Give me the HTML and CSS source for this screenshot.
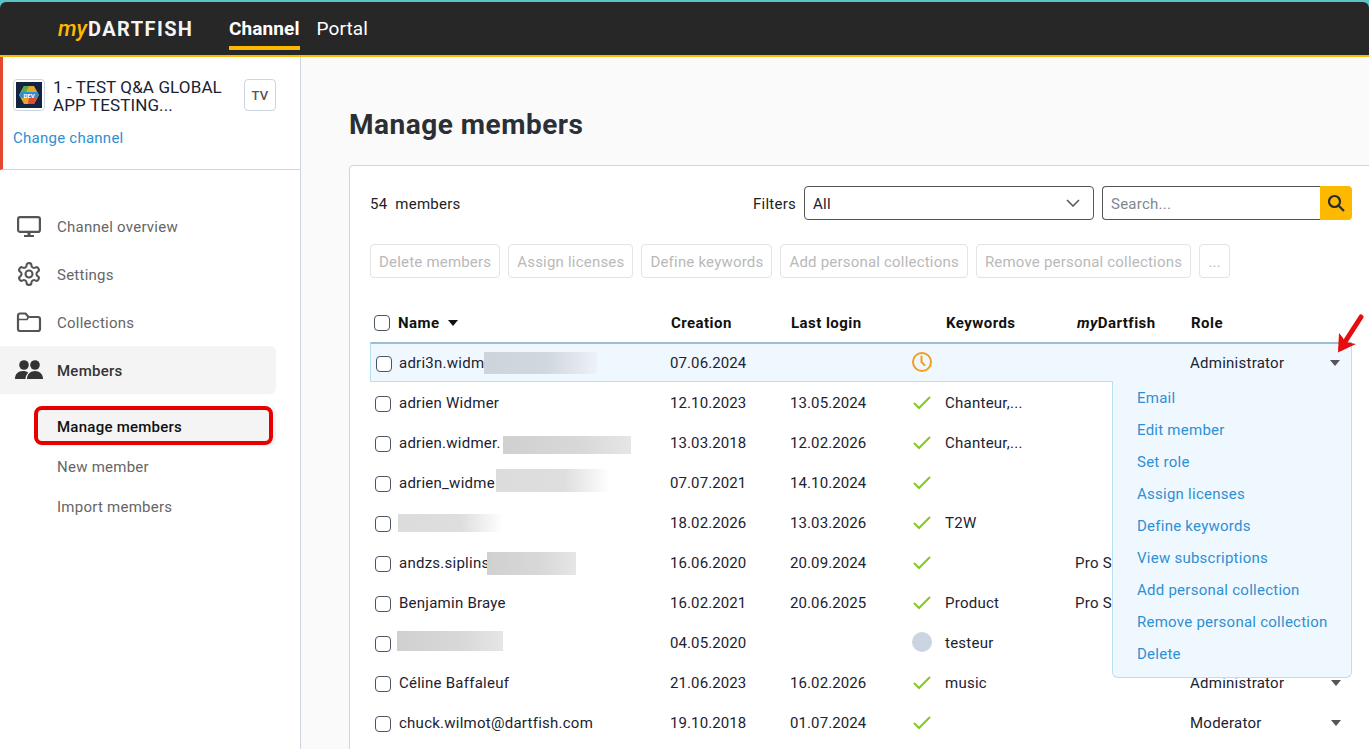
FILE: index.html
```html
<!DOCTYPE html>
<html lang="en">
<head>
<meta charset="utf-8">
<title>Manage members</title>
<link rel="stylesheet" href="styles.css">
</head>
<body>
<div class="app">
  <header class="topbar">
    <div class="logo"><span class="logo-my">my</span><span class="logo-name">DARTFISH</span></div>
    <nav class="topnav">
      <a class="topnav-item is-active">Channel</a>
      <a class="topnav-item">Portal</a>
    </nav>
  </header>
  <div class="body-row">
    <aside class="sidebar">
      <section class="channel">
        <div class="channel-head">
          <div class="channel-thumb">
            <svg width="26" height="26" viewBox="0 0 26 26"><rect width="26" height="26" fill="#14233f"/><path d="M8 4h10l5 9-5 9H8l-5-9z" fill="#e8a52c"/><path d="M8 4h5l-3 6H5z" fill="#4caf50"/><path d="M13 15h8l-3 7h-6z" fill="#e2493b"/><path d="M3 13l2-3h16l2 3-2 3H5z" fill="#2c8fd0"/><text class="thumb-text" x="13" y="15.500" text-anchor="middle">DEV</text></svg>
          </div>
          <div class="channel-name">1 - TEST Q&amp;A GLOBAL APP TESTING...</div>
          <div class="channel-badge">TV</div>
        </div>
        <a class="channel-change">Change channel</a>
      </section>
      <nav class="side-nav">
        <a class="side-item">
          <svg class="side-icon" viewBox="0 0 26 24" fill="none" stroke="#555" stroke-width="2.200"><rect x="2.100" y="3.100" width="21.800" height="14.800" rx="2"/><path d="M13 19v2" stroke-width="3"/><path d="M8 22h10" stroke-width="2"/></svg>
          <span>Channel overview</span>
        </a>
        <a class="side-item">
          <svg class="side-icon" viewBox="1 1 22 22" fill="none" stroke="#555" stroke-width="1.900" stroke-linejoin="round"><path d="M12.220 2h-.44a2 2 0 0 0-2 2v.18a2 2 0 0 1-1 1.730l-.43.25a2 2 0 0 1-2 0l-.15-.08a2 2 0 0 0-2.730.73l-.22.38a2 2 0 0 0 .73 2.730l.15.1a2 2 0 0 1 1 1.720v.51a2 2 0 0 1-1 1.740l-.15.09a2 2 0 0 0-.73 2.730l.22.38a2 2 0 0 0 2.730.73l.15-.08a2 2 0 0 1 2 0l.43.25a2 2 0 0 1 1 1.730V20a2 2 0 0 0 2 2h.44a2 2 0 0 0 2-2v-.18a2 2 0 0 1 1-1.730l.43-.25a2 2 0 0 1 2 0l.15.08a2 2 0 0 0 2.730-.73l.22-.39a2 2 0 0 0-.73-2.730l-.15-.08a2 2 0 0 1-1-1.740v-.5a2 2 0 0 1 1-1.740l.15-.09a2 2 0 0 0 .73-2.730l-.22-.38a2 2 0 0 0-2.730-.73l-.15.08a2 2 0 0 1-2 0l-.43-.25a2 2 0 0 1-1-1.730V4a2 2 0 0 0-2-2z"/><circle cx="12" cy="12" r="3.200"/></svg>
          <span>Settings</span>
        </a>
        <a class="side-item">
          <svg class="side-icon" viewBox="0 0 26 24" fill="none" stroke="#555" stroke-width="2.200" stroke-linejoin="round"><path d="M2 5.500a2 2 0 0 1 2-2h5.500l3 3.500H22a2 2 0 0 1 2 2V19a2 2 0 0 1-2 2H4a2 2 0 0 1-2-2z"/><path d="M2 9.500h9l1.500-2.500" stroke-width="1.600"/></svg>
          <span>Collections</span>
        </a>
        <a class="side-item is-current">
          <svg class="side-icon members-icon" viewBox="0 0 28 20" fill="#333"><circle cx="9" cy="5" r="4.800"/><circle cx="20" cy="5" r="4.800"/><path d="M0 19c0-5 3-8 8-8 2.300 0 4 .6 5.300 1.800C11.500 14.500 10.500 16.500 10.500 19z"/><path d="M12 19c0-5 3.500-8 8-8s8 3 8 8z"/></svg>
          <span>Members</span>
        </a>
        <div class="sub-nav">
          <a class="sub-item is-current">Manage members<span class="highlight-box"></span></a>
          <a class="sub-item">New member</a>
          <a class="sub-item">Import members</a>
        </div>
      </nav>
    </aside>
    <main class="content">
      <h1 class="page-title">Manage members</h1>
      <section class="card">
        <div class="filter-row">
          <div class="count">54&nbsp; members</div>
          <div class="filters">
            <label class="filter-label">Filters</label>
            <div class="select">
              <span>All</span>
              <svg width="14" height="8" viewBox="0 0 14 8" fill="none" stroke="#555" stroke-width="1.500"><path d="M1 1l6 6 6-6"/></svg>
            </div>
            <div class="search">
              <span class="search-input">Search...</span>
              <span class="search-btn">
                <svg width="18" height="18" viewBox="0 0 18 18" fill="none" stroke="#2b2b2b" stroke-width="2.200"><circle cx="7.500" cy="7.500" r="5.500"/><path d="M11.500 11.500l5.500 5.500"/></svg>
              </span>
            </div>
          </div>
        </div>
        <div class="actions">
          <button class="action">Delete members</button>
          <button class="action">Assign licenses</button>
          <button class="action">Define keywords</button>
          <button class="action">Add personal collections</button>
          <button class="action">Remove personal collections</button>
          <button class="action action-more">...</button>
        </div>
        <div class="table">
          <div class="row head">
            <span class="check"></span>
            <span class="name">Name<i class="sort"></i></span>
            <span>Creation</span>
            <span>Last login</span>
            <span></span>
            <span>Keywords</span>
            <span><em>my</em>Dartfish</span>
            <span>Role</span>
          </div>
          <div class="row is-open">
            <span class="check"></span>
            <span class="name">adri3n.widm<i class="blur blur-blue b1"></i></span>
            <span class="date">07.06.2024</span><span></span>
            <span class="status"><svg class="clock" width="22" height="22" viewBox="0 0 22 22" fill="none" stroke="#f39c1f" stroke-width="2"><circle cx="11" cy="11" r="9"/><path d="M10.500 5.500v5.500l3 3" stroke-linecap="round"/></svg></span>
            <span></span><span></span>
            <span class="role">Administrator<i class="caret"></i></span>
          </div>
          <div class="row">
            <span class="check"></span><span class="name">adrien Widmer</span>
            <span class="date">12.10.2023</span><span class="date">13.05.2024</span>
            <span class="status"><svg class="tick" width="18" height="14" viewBox="0 0 18 14" fill="none" stroke="#85c822" stroke-width="2"><path d="M1 7l5 5L17 1"/></svg></span>
            <span>Chanteur,...</span><span></span><span></span>
          </div>
          <div class="row">
            <span class="check"></span><span class="name">adrien.widmer.<i class="blur blur-grey b2"></i></span>
            <span class="date">13.03.2018</span><span class="date">12.02.2026</span>
            <span class="status"><svg class="tick" width="18" height="14" viewBox="0 0 18 14" fill="none" stroke="#85c822" stroke-width="2"><path d="M1 7l5 5L17 1"/></svg></span>
            <span>Chanteur,...</span><span></span><span></span>
          </div>
          <div class="row">
            <span class="check"></span><span class="name">adrien_widme<i class="blur blur-fade b3"></i></span>
            <span class="date">07.07.2021</span><span class="date">14.10.2024</span>
            <span class="status"><svg class="tick" width="18" height="14" viewBox="0 0 18 14" fill="none" stroke="#85c822" stroke-width="2"><path d="M1 7l5 5L17 1"/></svg></span>
            <span></span><span></span><span></span>
          </div>
          <div class="row">
            <span class="check"></span><span class="name"><i class="blur blur-fade b4"></i></span>
            <span class="date">18.02.2026</span><span class="date">13.03.2026</span>
            <span class="status"><svg class="tick" width="18" height="14" viewBox="0 0 18 14" fill="none" stroke="#85c822" stroke-width="2"><path d="M1 7l5 5L17 1"/></svg></span>
            <span>T2W</span><span></span><span></span>
          </div>
          <div class="row">
            <span class="check"></span><span class="name">andzs.siplins<i class="blur blur-grey b5"></i></span>
            <span class="date">16.06.2020</span><span class="date">20.09.2024</span>
            <span class="status"><svg class="tick" width="18" height="14" viewBox="0 0 18 14" fill="none" stroke="#85c822" stroke-width="2"><path d="M1 7l5 5L17 1"/></svg></span>
            <span></span><span>Pro S</span><span></span>
          </div>
          <div class="row">
            <span class="check"></span><span class="name">Benjamin Braye</span>
            <span class="date">16.02.2021</span><span class="date">20.06.2025</span>
            <span class="status"><svg class="tick" width="18" height="14" viewBox="0 0 18 14" fill="none" stroke="#85c822" stroke-width="2"><path d="M1 7l5 5L17 1"/></svg></span>
            <span>Product</span><span>Pro S</span><span></span>
          </div>
          <div class="row">
            <span class="check"></span><span class="name"><i class="blur blur-grey b6"></i></span>
            <span class="date">04.05.2020</span><span></span>
            <span class="status"><i class="dot"></i></span>
            <span>testeur</span><span></span><span></span>
          </div>
          <div class="row">
            <span class="check"></span><span class="name">Céline Baffaleuf</span>
            <span class="date">21.06.2023</span><span class="date">16.02.2026</span>
            <span class="status"><svg class="tick" width="18" height="14" viewBox="0 0 18 14" fill="none" stroke="#85c822" stroke-width="2"><path d="M1 7l5 5L17 1"/></svg></span>
            <span>music</span><span></span><span class="role">Administrator<i class="caret"></i></span>
          </div>
          <div class="row">
            <span class="check"></span><span class="name">chuck.wilmot@dartfish.com</span>
            <span class="date">19.10.2018</span><span class="date">01.07.2024</span>
            <span class="status"><svg class="tick" width="18" height="14" viewBox="0 0 18 14" fill="none" stroke="#85c822" stroke-width="2"><path d="M1 7l5 5L17 1"/></svg></span>
            <span></span><span></span><span class="role">Moderator<i class="caret"></i></span>
          </div>
          <ul class="menu">
            <li>Email</li>
            <li>Edit member</li>
            <li>Set role</li>
            <li>Assign licenses</li>
            <li>Define keywords</li>
            <li>View subscriptions</li>
            <li>Add personal collection</li>
            <li>Remove personal collection</li>
            <li>Delete</li>
          </ul>
          <svg class="arrow" width="30" height="42" viewBox="0 0 30 42"><path d="M26 3L6 34" stroke="#e50d0d" stroke-width="5" stroke-linecap="round" fill="none"/><path d="M3 38.500L4 19l4 5 2 4 11 2z" fill="#e50d0d"/></svg>
        </div>
      </section>
    </main>
  </div>
</div>
</body>
</html>
```
FILE: styles.css
```css
* { box-sizing: border-box; }
html, body { margin: 0; height: 100%; overflow: hidden; }
body {
  background: #5cc4c6;
  font-family: Roboto, "Liberation Sans", sans-serif;
  font-size: 15px;
  letter-spacing: .25px;
  color: #1c2230;
}
.app {
  height: 749px;
  padding-top: 2px;
  display: flex;
  flex-direction: column;
}
.topbar {
  height: 55px;
  flex: none;
  background: #272727;
  border-bottom: 2px solid #fdb900;
  border-radius: 6px 6px 0 0;
  display: flex;
  align-items: flex-start;
  padding-left: 58px;
  color: #fff;
  letter-spacing: 0;
}
.logo {
  width: 171px;
  height: 53px;
  display: flex;
  align-items: center;
}
.logo-my {
  color: #fdb900;
  font-style: italic;
  font-weight: 500;
  font-size: 22px;
  margin-right: 1px;
}
.logo-name {
  font-size: 20px;
  font-weight: 700;
  letter-spacing: 1.400px;
  color: #f4f4f4;
}
.topnav { display: flex; gap: 17px; }
.topnav-item {
  font-size: 19px;
  height: 48px;
  padding-top: 15px;
  letter-spacing: .1px;
}
.topnav-item.is-active {
  font-weight: 700;
  border-bottom: 4px solid #fdb900;
}
.body-row { flex: 1; min-height: 0; display: flex; background: #fafafa; }
.sidebar {
  width: 301px;
  flex: none;
  background: #fff;
  border-right: 1px solid #cfd5dc;
}
.channel {
  height: 113px;
  border-left: 3px solid #e2492f;
  border-bottom: 1px solid #cfd5dc;
  padding: 22px 24px 0 10px;
}
.channel-head { display: flex; align-items: flex-start; }
.channel-thumb {
  width: 32px;
  height: 32px;
  flex: none;
  border: 1px solid #cbd5e1;
  border-radius: 4px;
  padding: 2px;
}
.channel-thumb svg { display: block; }
.thumb-text { font-size: 6px; font-weight: 700; fill: #fff; letter-spacing: 0; }
.channel-name {
  width: 191px;
  margin: -1px 0 0 8px;
  font-size: 17px;
  line-height: 18px;
  letter-spacing: .12px;
  color: #1a2233;
}
.channel-badge {
  width: 32px;
  height: 32px;
  flex: none;
  border: 1px solid #cbd5e1;
  border-radius: 4px;
  color: #555;
  font-size: 13px;
  font-weight: 500;
  display: flex;
  align-items: center;
  justify-content: center;
}
.channel-change { display: block; margin-top: 15px; color: #2f8fd3; font-size: 15px; }
.side-nav { padding: 32px 24px 0 0; }
.side-item {
  height: 48px;
  display: flex;
  align-items: center;
  padding-left: 16px;
  color: #666;
  font-size: 15px;
}
.side-item span { margin-left: 15px; padding-top: 1px; }
.side-item.is-current { background: #f4f4f4; border-radius: 0 6px 6px 0; color: #333; font-weight: 500; }
.side-icon { width: 26px; height: 24px; flex: none; }
.members-icon { width: 28px; margin: 0 -1px; }
.sub-nav { padding: 12px 0 0 36px; }
.sub-item {
  position: relative;
  height: 40px;
  display: flex;
  align-items: center;
  padding: 2px 0 0 21px;
  color: #666;
  font-size: 15px;
}
.sub-item.is-current { background: #f4f4f4; color: #111; font-weight: 500; border-radius: 6px; }
.highlight-box {
  position: absolute;
  left: -2px;
  top: 0;
  width: 239px;
  height: 39px;
  border: 4px solid #e60000;
  border-radius: 8px;
}
.content { flex: 1; min-width: 0; padding: 0 0 0 48px; }
.page-title {
  margin: 0;
  height: 108px;
  padding-top: 51px;
  font-size: 28px;
  font-weight: 700;
  letter-spacing: .5px;
  color: #2b2f36;
  line-height: 34px;
}
.card {
  width: 1040px;
  height: 600px;
  background: #fff;
  border: 1px solid #cfd5dc;
  border-radius: 4px 0 0 0;
  padding: 20px 20px 0 20px;
}
.filter-row { width: 982px; height: 34px; display: flex; align-items: center; justify-content: space-between; }
.count { padding-top: 2px; color: #222; }
.filters { display: flex; align-items: center; }
.filter-label { margin-right: 8px; padding-top: 1px; color: #222; }
.select {
  width: 290px;
  height: 34px;
  border: 1px solid #555;
  border-radius: 4px;
  padding: 0 13px 0 8px;
  display: flex;
  align-items: center;
  justify-content: space-between;
}
.select span { padding-top: 2px; }
.search { width: 250px; height: 34px; margin-left: 8px; display: flex; }
.search-input {
  flex: 1;
  border: 1px solid #555;
  border-right: 0;
  border-radius: 4px 0 0 4px;
  padding-left: 8px;
  line-height: 34px;
  color: #808890;
}
.search-btn {
  width: 32px;
  background: #fdb900;
  border-radius: 0 4px 4px 0;
  display: flex;
  align-items: center;
  justify-content: center;
}
.actions { display: flex; gap: 8px; margin-top: 24px; height: 34px; }
.action {
  height: 34px;
  padding: 2px 8px 0;
  background: #fff;
  border: 1px solid #e3e3e3;
  border-radius: 4px;
  color: #b9b9b9;
  font: 15px Roboto, "Liberation Sans", sans-serif;
  letter-spacing: .2px;
}
.action-more { min-width: 31px; }
.table { position: relative; width: 982px; margin-top: 24px; }
.row {
  height: 40px;
  display: grid;
  grid-template-columns: 29px 271px 120px 122px 33px 130px 115px 162px;
  align-items: center;
  padding-top: 2px;
  white-space: nowrap;
}
.row > span { min-width: 0; }
.date { letter-spacing: .1px; }
.check {
  width: 16px;
  height: 16px;
  margin: 2px 0 0 5px;
  border: 1.500px solid #4b5563;
  border-radius: 4px;
  background: #fff;
}
.row.head {
  font-weight: 700;
  color: #111;
  letter-spacing: .45px;
  grid-template-columns: 28px 273px 120px 122px 33px 131px 114px 161px;
}
.row.head .check { margin: 0 0 0 4px; }
.row.head em { font-style: italic; }
.sort {
  display: block;
  width: 0;
  height: 0;
  margin-left: 8px;
  border: 5px solid transparent;
  border-top: 6px solid #111;
  border-bottom: 0;
}
.name { display: flex; align-items: center; }
.is-open {
  background: #f0f8ff;
  border: 1px solid #b8e0f5;
  border-top: 2px solid #9fbdd4;
  padding-top: 1px;
  grid-template-columns: 28px 271px 120px 122px 33px 130px 115px 161px;
}
.status { display: flex; justify-content: center; margin-left: -14px; }
.clock { display: block; margin-top: -2px; }
.tick { display: block; }
.dot { width: 20px; height: 20px; margin-top: -2px; border-radius: 50%; background: #cbd5e1; }
.role { display: flex; justify-content: space-between; align-items: center; padding-right: 11px; }
.caret {
  width: 0;
  height: 0;
  border: 5.500px solid transparent;
  border-top: 6px solid #555;
  border-bottom: 0;
}
.blur { display: block; flex: none; }
.blur-blue { background: linear-gradient(90deg, #cdd4db 0%, #d0d7de 55%, #e2e8ee 85%, #edf3f8 100%); }
.blur-grey { background: linear-gradient(90deg, #d0d0d0 0%, #d8d8d8 60%, #e6e6e6 100%); }
.blur-fade { background: linear-gradient(90deg, #dcdcdc 0%, #dedede 60%, #fff 100%); }
.b1 { width: 113px; height: 22px; }
.b2 { width: 128px; height: 18px; margin: 4px 0 0 2px; }
.b3 { width: 114px; height: 23px; margin: -5px 0 0 1px; }
.b4 { width: 105px; height: 18px; margin-left: -1px; }
.b5 { width: 89px; height: 23px; margin-left: -2px; }
.b6 { width: 106px; height: 20px; margin: -4px 0 0 -2px; }
.menu {
  position: absolute;
  right: 0;
  top: 79px;
  width: 240px;
  height: 297px;
  margin: 0;
  list-style: none;
  background: #f0f8ff;
  border: 1px solid #b8e0f5;
  border-top: 0;
  border-radius: 0 0 6px 6px;
  padding: 1px 0 0 24px;
}
.menu li { height: 32px; line-height: 32px; color: #2f8fd3; white-space: nowrap; }
.arrow { position: absolute; right: -13px; top: 12px; }
```
